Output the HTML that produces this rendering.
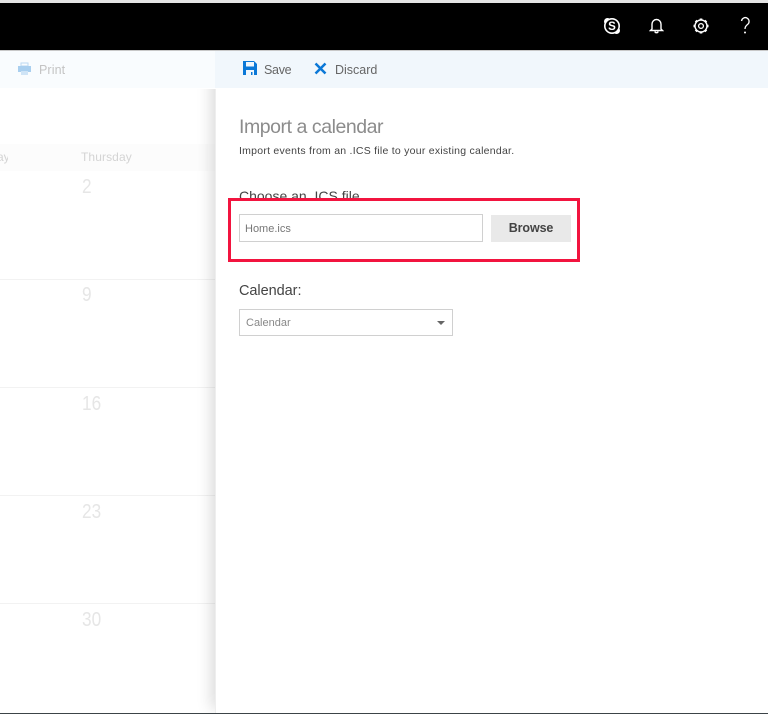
<!DOCTYPE html>
<html><head><meta charset="utf-8"><style>
html,body{margin:0;padding:0;background:#fff}
body{width:768px;height:714px;position:relative;overflow:hidden;font-family:"Liberation Sans",sans-serif}
#w{position:absolute;left:0;top:0;width:768px;height:714px;overflow:hidden;filter:blur(.35px)}
.a{position:absolute;white-space:nowrap}
.d{font-size:20px;color:#e6e6e6;transform:scaleX(.86);transform-origin:left top}
</style></head><body><div id="w">
<div class="a" style="left:0;top:0;width:768px;height:3px;background:#e4e4e4"></div>
<div class="a" style="left:0;top:3px;width:768px;height:47px;background:#000"></div>
<div class="a" style="left:0;top:50px;width:768px;height:1px;background:#c8c8c8"></div>
<div class="a" style="left:0;top:51px;width:215px;height:37px;background:#f9fcfe"></div>
<div class="a" style="left:0;top:144px;width:215px;height:27px;background:#fcfcfc"></div>
<div class="a" style="left:0;top:279px;width:215px;height:1px;background:#f2f2f2"></div>
<div class="a" style="left:0;top:387px;width:215px;height:1px;background:#f2f2f2"></div>
<div class="a" style="left:0;top:495px;width:215px;height:1px;background:#f2f2f2"></div>
<div class="a" style="left:0;top:603px;width:215px;height:1px;background:#f2f2f2"></div>
<svg class="a" style="left:17px;top:62px" width="15" height="14" viewBox="0 0 15 14"><rect x="4" y="1" width="7" height="3" fill="none" stroke="#bcd9f2"/><rect x="1" y="4" width="13" height="6" fill="#a9cfef"/><rect x="4" y="9" width="7" height="4" fill="#cfe4f6"/></svg>
<div class="a" style="left:39px;top:63px;font-size:12.5px;letter-spacing:.1px;color:#c4c4c4">Print</div>
<div class="a" style="left:81px;top:150px;font-size:12px;letter-spacing:.1px;color:#d4d4d4">Thursday</div>
<div class="a" style="left:-3px;top:150px;width:11px;overflow:hidden;font-size:12px;color:#d4d4d4;text-align:right">ay</div>
<div class="a d" style="left:82px;top:176px">2</div>
<div class="a d" style="left:82px;top:284px">9</div>
<div class="a d" style="left:82px;top:393px">16</div>
<div class="a d" style="left:82px;top:501px">23</div>
<div class="a d" style="left:82px;top:609px">30</div>
<div class="a" style="left:215px;top:51px;width:553px;height:662px;background:#fff;border-left:1px solid #eee;box-sizing:border-box;box-shadow:-8px 0 14px -4px rgba(0,0,0,.14);clip-path:inset(38px 0 -2px -30px)"></div>
<div class="a" style="left:215px;top:51px;width:553px;height:37px;background:#f1f7fc"></div>
<div class="a" style="left:0;top:713px;width:768px;height:1px;background:#3c4448"></div>
<svg class="a" style="left:243px;top:61px" width="14" height="14" viewBox="0 0 14 14"><path d="M0 0H11L14 3V14H0Z" fill="#0b78d7"/><rect x="3" y="1" width="8" height="4.500" fill="#f1f7fc"/><rect x="3" y="9" width="8" height="5" fill="#f1f7fc"/><rect x="8" y="11" width="1.500" height="3" fill="#0b78d7"/></svg>
<div class="a" style="left:264px;top:63px;font-size:12.5px;letter-spacing:-.3px;color:#666">Save</div>
<svg class="a" style="left:314px;top:62px" width="13" height="13" viewBox="0 0 13 13"><path d="M1.500 1.500L11.500 11.500M11.500 1.500L1.500 11.500" stroke="#0b78d7" stroke-width="2.500"/></svg>
<div class="a" style="left:335px;top:63px;font-size:12.5px;color:#666">Discard</div>
<div class="a" style="left:239px;top:116px;font-size:19.500px;letter-spacing:-.45px;color:#8c8c8c">Import a calendar</div>
<div class="a" style="left:239px;top:145px;font-size:10.500px;letter-spacing:.25px;color:#444">Import events from an .ICS file to your existing calendar.</div>
<div class="a" style="left:239px;top:188px;font-size:14px;color:#444">Choose an .ICS file</div>
<div class="a" style="left:228px;top:198px;width:352px;height:64px;box-sizing:border-box;border:3px solid #f2143f;background:#fff"></div>
<div class="a" style="left:239px;top:214px;width:244px;height:28px;box-sizing:border-box;border:1px solid #d0d0d0;padding:8px 0 0 5px;font-size:11px;color:#777">Home.ics</div>
<div class="a" style="left:491px;top:215px;width:80px;height:27px;background:#e9e9e9;text-align:center;line-height:27px;font-size:12.500px;font-weight:bold;color:#444;letter-spacing:-.1px">Browse</div>
<div class="a" style="left:239px;top:283px;font-size:14.500px;letter-spacing:-.05px;color:#444">Calendar:</div>
<div class="a" style="left:239px;top:309px;width:214px;height:27px;box-sizing:border-box;border:1px solid #d0d0d0;padding:7px 0 0 6px;font-size:11px;color:#888">Calendar</div>
<svg class="a" style="left:437px;top:321px" width="8" height="4" viewBox="0 0 8 4"><path d="M0 0H8L4 4Z" fill="#666"/></svg>
<svg class="a" style="left:603px;top:17px" width="18" height="18" viewBox="0 0 18 18"><circle cx="4.500" cy="4.500" r="3.500" fill="#fff"/><circle cx="13.500" cy="13.500" r="3.500" fill="#fff"/><circle cx="9" cy="9" r="7.200" fill="#000" stroke="#fff" stroke-width="1.600"/><text x="9" y="13" text-anchor="middle" font-family="Liberation Sans" font-weight="bold" font-size="11.500" fill="#fff">S</text></svg>
<svg class="a" style="left:649px;top:17px" width="15" height="17" viewBox="0 0 15 17"><path d="M3 12V7A4.500 4.500 0 0 1 12 7V12L13.500 13.500H1.500Z M5.800 14.500A1.800 1.800 0 0 0 9.200 14.500" fill="none" stroke="#fff" stroke-width="1.400"/></svg>
<svg class="a" style="left:692px;top:17px" width="18" height="18" viewBox="0 0 18 18"><circle cx="9" cy="9" r="6" fill="none" stroke="#fff" stroke-width="1.400"/><circle cx="9" cy="9" r="2.400" fill="none" stroke="#fff" stroke-width="1.300"/><path d="M9 1.500V3.500M9 14.500V16.500M1.500 9H3.500M14.500 9H16.500M3.700 3.700L5 5M13 13L14.300 14.300M14.300 3.700L13 5M5 13L3.700 14.300" stroke="#fff" stroke-width="2.600"/></svg>
<svg class="a" style="left:739px;top:16px" width="12" height="20" viewBox="0 0 12 20"><path d="M2.500 5A3.800 3.800 0 1 1 8.500 8.500C6.800 9.800 6 10.800 6 13" fill="none" stroke="#fff" stroke-width="1.300"/><circle cx="6" cy="16.500" r="1" fill="#fff"/></svg>
</div></body></html>
